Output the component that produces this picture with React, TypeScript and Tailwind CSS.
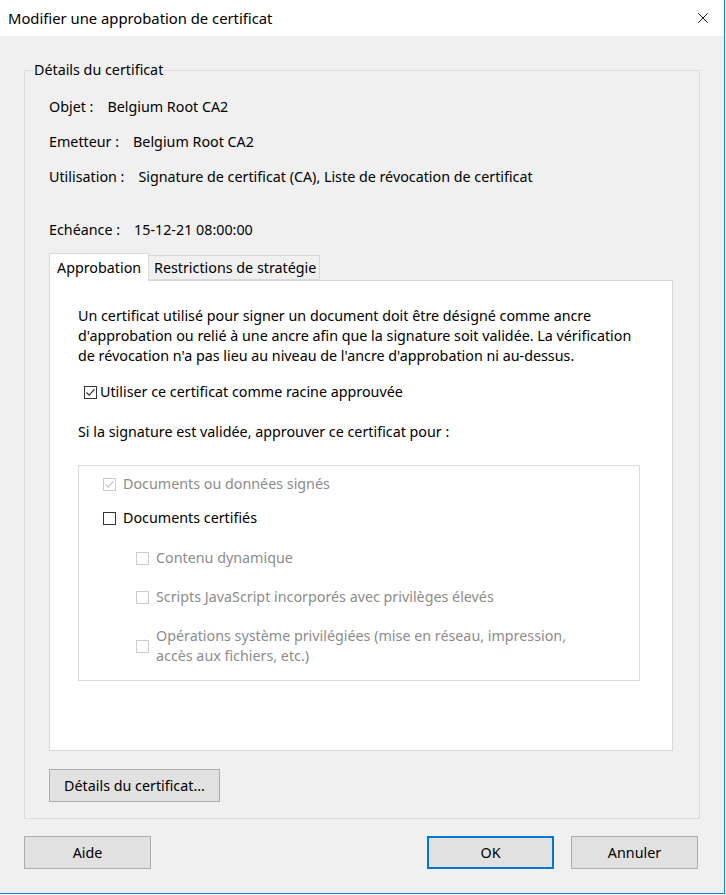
import { X } from "lucide-react"

type BoxProps = { checked?: boolean; disabled?: boolean }

function CheckBox({ checked, disabled }: BoxProps) {
  const border = disabled ? "border-[#cccccc]" : "border-[#333333]"
  return (
    <span className={`flex h-[13px] w-[13px] shrink-0 items-center justify-center border bg-white ${border}`}>
      {checked && (
        <svg width="11" height="11" viewBox="0 0 11 11" fill="none">
          <path
            d="M1.5 5.5 L4.2 8.2 L9.5 2.2"
            stroke={disabled ? "#c4c4c4" : "#333333"}
            strokeWidth="1.2"
          />
        </svg>
      )}
    </span>
  )
}

function Button({ label, width, primary }: { label: string; width: string; primary?: boolean }) {
  return (
    <button
      className={`h-[33px] ${width} bg-[#e1e1e1] text-black ${
        primary ? "border-2 border-[#0078d7]" : "border border-[#adadad]"
      }`}
    >
      {label}
    </button>
  )
}

export default function App() {
  const info = [
    { label: "Objet :", value: "Belgium Root CA2" },
    { label: "Emetteur :", value: "Belgium Root CA2" },
    { label: "Utilisation :", value: "Signature de certificat (CA), Liste de révocation de certificat" },
  ]

  const subItems = [
    "Contenu dynamique",
    "Scripts JavaScript incorporés avec privilèges élevés",
  ]

  return (
    <div className="h-[895px] w-[726px] bg-white font-['Noto_Sans',sans-serif] text-[14.3px] leading-[20px] text-black">
      <div className="flex h-[894px] w-[725px] flex-col border-r border-b border-[#1883d7]">
        {/* title bar */}
        <div className="flex h-[36px] items-center justify-between bg-white pl-[8px] pr-[12px]">
          <span className="text-[14.8px]">Modifier une approbation de certificat</span>
          <X className="h-[18px] w-[18px] text-black" strokeWidth={1.2} />
        </div>

        <div className="flex flex-1 flex-col bg-[#f0f0f0] px-[24px] pt-[24px]">
          <fieldset className="border border-[#dcdcdc]">
            <legend className="ml-[8px] px-[1px]">Détails du certificat</legend>

            <div className="pr-[26px] pb-[16px] pl-[24px]">
              <div className="mt-[17px] flex flex-col gap-[15px]">
                {info.map((row) => (
                  <div key={row.label} className="flex gap-[14px]">
                    <span>{row.label}</span>
                    <span>{row.value}</span>
                  </div>
                ))}
              </div>
              <div className="mt-[33px] flex gap-[14px]">
                <span>Echéance :</span>
                <span>15-12-21 08:00:00</span>
              </div>

              {/* tabs */}
              <div className="mt-[13px] flex items-end">
                <div className="relative z-10 -mb-px flex h-[28px] w-[100px] items-center border border-b-0 border-[#d9d9d9] bg-white pl-[7px]">
                  Approbation
                </div>
                <div className="flex h-[25px] items-center border border-l-0 border-[#d9d9d9] bg-[#f0f0f0] pr-[3px] pl-[5px]">
                  Restrictions de stratégie
                </div>
              </div>

              <div className="flex h-[471px] flex-col border border-[#d9d9d9] bg-white pt-[25px] pl-[28px]">
                <p>
                  Un certificat utilisé pour signer un document doit être désigné comme ancre
                  <br />
                  d'approbation ou relié à une ancre afin que la signature soit validée. La vérification
                  <br />
                  de révocation n'a pas lieu au niveau de l'ancre d'approbation ni au-dessus.
                </p>

                <label className="mt-[16px] flex items-center gap-[3px] pl-[6px]">
                  <CheckBox checked />
                  <span>Utiliser ce certificat comme racine approuvée</span>
                </label>

                <p className="mt-[20px]">Si la signature est validée, approuver ce certificat pour :</p>

                <div className="mt-[23px] flex w-[562px] flex-col border border-[#dcdcdc] bg-white pt-[8px] pb-[14px] pl-[24px]">
                  <label className="flex items-center gap-[7px] text-[#8c8c8c]">
                    <CheckBox checked disabled />
                    <span>Documents ou données signés</span>
                  </label>
                  <label className="mt-[14px] flex items-center gap-[7px]">
                    <CheckBox />
                    <span>Documents certifiés</span>
                  </label>
                  <div className="flex flex-col gap-[19px] pt-[20px] pl-[33px] text-[#8c8c8c]">
                    {subItems.map((s) => (
                      <label key={s} className="flex items-center gap-[7px]">
                        <CheckBox disabled />
                        <span>{s}</span>
                      </label>
                    ))}
                    <label className="flex items-center gap-[7px]">
                      <CheckBox disabled />
                      <span>
                        Opérations système privilégiées (mise en réseau, impression,
                        <br />
                        accès aux fichiers, etc.)
                      </span>
                    </label>
                  </div>
                </div>
              </div>

              <div className="mt-[18px]">
                <Button label="Détails du certificat..." width="w-[171px]" />
              </div>
            </div>
          </fieldset>

          <div className="mt-[17px] flex items-center">
            <Button label="Aide" width="w-[127px]" />
            <div className="ml-auto flex gap-[17px] pr-[2px]">
              <Button label="OK" width="w-[127px]" primary />
              <Button label="Annuler" width="w-[127px]" />
            </div>
          </div>
        </div>
      </div>
    </div>
  )
}
